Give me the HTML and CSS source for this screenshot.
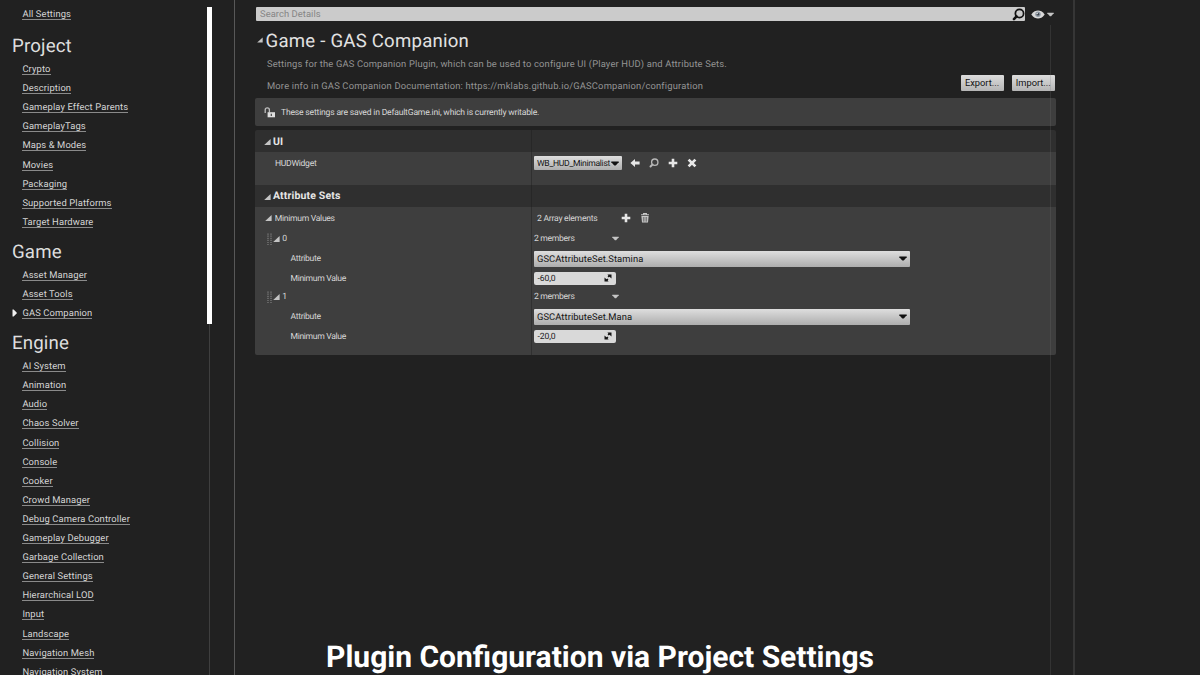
FILE: index.html
```
<!DOCTYPE html>
<html lang="en">
<head>
<meta charset="utf-8">
<title>Project Settings</title>
<link rel="stylesheet" href="styles.css">
</head>
<body>
<svg width="0" height="0" class="defs">
  <symbol id="tri" viewBox="0 0 7 6"><path d="M6.6 0V6H0.2Z" fill="#c4c4c4"/></symbol>
  <symbol id="down" viewBox="0 0 8 5"><path d="M0.3 0.5H7.7V1.2L4.7 4.5H3.3L0.3 1.2Z" fill="currentColor"/></symbol>
  <symbol id="plus" viewBox="0 0 10 10"><path d="M3.7 0.7H6.3V3.7H9.3V6.3H6.3V9.3H3.7V6.3H0.7V3.7H3.7Z" fill="#e6e6e6"/></symbol>
  <symbol id="mag" viewBox="0 0 12 12"><circle cx="6.9" cy="5" r="3.8" fill="none" stroke="currentColor" stroke-width="1.6"/><path d="M4.2 7.8L1.8 10.2" stroke="currentColor" stroke-width="2.4" stroke-linecap="round"/></symbol>
  <symbol id="grip" viewBox="0 0 5 12"><path d="M1 0.5V12M4 0.5V12" stroke="#858585" stroke-width="1.1" stroke-dasharray="1.2 0.9"/></symbol>
  <symbol id="spin" viewBox="0 0 8 8"><path d="M3.4 0.5H7.5V4.6L6.1 3.3L4.7 1.9ZM0.5 3.4L1.9 4.7L3.3 6.1L4.6 7.5H0.5Z" fill="#161616"/><path d="M4.1 2.9L5.9 1.3M2.1 6.7L3.9 5.1" stroke="#161616" stroke-width="1.6"/></symbol>
</svg>
<div class="app">
  <nav class="sidebar">
    <div class="links">
      <div class="item all"><a>All Settings</a></div>
      <h2>Project</h2>
      <div class="item"><a>Crypto</a></div>
      <div class="item"><a>Description</a></div>
      <div class="item"><a>Gameplay Effect Parents</a></div>
      <div class="item"><a>GameplayTags</a></div>
      <div class="item"><a>Maps &amp; Modes</a></div>
      <div class="item"><a>Movies</a></div>
      <div class="item"><a>Packaging</a></div>
      <div class="item"><a>Supported Platforms</a></div>
      <div class="item"><a>Target Hardware</a></div>
      <h2>Game</h2>
      <div class="item"><a>Asset Manager</a></div>
      <div class="item"><a>Asset Tools</a></div>
      <div class="item current"><svg class="pointer" viewBox="0 0 5 8"><path d="M0.5 0.6H1.6L4.6 3.4V4.6L1.6 7.4H0.5Z" fill="#f0f0f0"/></svg><a>GAS Companion</a></div>
      <h2>Engine</h2>
      <div class="item"><a>AI System</a></div>
      <div class="item"><a>Animation</a></div>
      <div class="item"><a>Audio</a></div>
      <div class="item"><a>Chaos Solver</a></div>
      <div class="item"><a>Collision</a></div>
      <div class="item"><a>Console</a></div>
      <div class="item"><a>Cooker</a></div>
      <div class="item"><a>Crowd Manager</a></div>
      <div class="item"><a>Debug Camera Controller</a></div>
      <div class="item"><a>Gameplay Debugger</a></div>
      <div class="item"><a>Garbage Collection</a></div>
      <div class="item"><a>General Settings</a></div>
      <div class="item"><a>Hierarchical LOD</a></div>
      <div class="item"><a>Input</a></div>
      <div class="item"><a>Landscape</a></div>
      <div class="item"><a>Navigation Mesh</a></div>
      <div class="item"><a>Navigation System</a></div>
    </div>
    <div class="scroll"><div class="thumb"></div><div class="track"></div></div>
  </nav>
  <main class="details">
    <div class="search-row">
      <div class="search"><span>Search Details</span><svg class="search-icon"><use href="#mag"/></svg></div>
      <svg class="eye" viewBox="0 0 14 9"><path d="M0.3 4.5C2.5 1.4 4.8 0.5 7 0.5S11.5 1.4 13.7 4.5C11.5 7.6 9.2 8.5 7 8.5S2.5 7.6 0.3 4.5Z" fill="#d9d9d9"/><circle cx="7" cy="4.3" r="2.7" fill="#8d97a2"/><circle cx="7" cy="4.3" r="1.2" fill="#3a4149"/><circle cx="6.2" cy="3.5" r=".7" fill="#eee"/></svg>
      <svg class="caret light"><use href="#down"/></svg>
    </div>
    <div class="title"><svg class="tri"><use href="#tri"/></svg><h1>Game - GAS Companion</h1></div>
    <p class="desc">Settings for the GAS Companion Plugin, which can be used to configure UI (Player HUD) and Attribute Sets.</p>
    <div class="desc-row">
      <p class="desc">More info in GAS Companion Documentation: https://mklabs.github.io/GASCompanion/configuration</p>
      <div class="buttons"><button class="export">Export...</button><button class="import">Import...</button></div>
    </div>
    <div class="notice">
      <svg class="lock" viewBox="0 0 12 11"><path d="M1.2 6V3A2.1 2.1 0 0 1 5.4 3V5.6" fill="none" stroke="#bdbdbd" stroke-width="1.3"/><path d="M3.6 5.2H11V10.3H3.6Z" fill="#dedede"/><path d="M6.7 6.7H8V9H6.7Z" fill="#555"/></svg>
      <span>These settings are saved in DefaultGame.ini, which is currently writable.</span>
    </div>
    <section class="grid">
      <div class="row head ui"><div class="name"><svg class="tri"><use href="#tri"/></svg>UI</div><div class="value"></div></div>
      <div class="row hud"><div class="name">HUDWidget</div><div class="value">
        <div class="combo small"><span>WB_HUD_Minimalist</span><svg class="caret"><use href="#down"/></svg></div>
        <svg class="ico" viewBox="0 0 10 10"><path d="M0.4 5L5 0.9V3.4H9.6V6.6H5V9.1Z" fill="#e6e6e6"/></svg>
        <svg class="ico find"><use href="#mag"/></svg>
        <svg class="ico"><use href="#plus"/></svg>
        <svg class="ico" viewBox="0 0 10 10"><path d="M1.6 1.6L8.4 8.4M8.4 1.6L1.6 8.4" stroke="#e6e6e6" stroke-width="2.7"/></svg>
      </div></div>
      <div class="row head sets"><div class="name"><svg class="tri"><use href="#tri"/></svg>Attribute Sets</div><div class="value"></div></div>
      <div class="row array"><div class="name"><svg class="tri"><use href="#tri"/></svg><span>Minimum Values</span></div><div class="value"><span class="count">2 Array elements</span>
        <svg class="ico"><use href="#plus"/></svg>
        <svg class="ico bin" viewBox="0 0 10 10"><path d="M3.6 1.2V0.5H6.4V1.2M1 1.8H9" fill="none" stroke="#c9c9c9" stroke-width="1.1"/><path d="M1.4 3H8.6L8 9.6H2Z" fill="#c9c9c9"/><path d="M3.4 4V8.7M5 4V8.7M6.6 4V8.7" stroke="#555" stroke-width=".7"/></svg>
      </div></div>
      <div class="row element"><div class="name"><svg class="grip"><use href="#grip"/></svg><svg class="tri"><use href="#tri"/></svg>0</div><div class="value"><span class="members">2 members</span><svg class="caret light"><use href="#down"/></svg></div></div>
      <div class="row leaf attr"><div class="name">Attribute</div><div class="value"><div class="combo wide"><span>GSCAttributeSet.Stamina</span><svg class="caret"><use href="#down"/></svg></div></div></div>
      <div class="row leaf"><div class="name">Minimum Value</div><div class="value"><div class="number"><span>-60,0</span><svg class="spin"><use href="#spin"/></svg></div></div></div>
      <div class="row element second"><div class="name"><svg class="grip"><use href="#grip"/></svg><svg class="tri"><use href="#tri"/></svg>1</div><div class="value"><span class="members">2 members</span><svg class="caret light"><use href="#down"/></svg></div></div>
      <div class="row leaf attr"><div class="name">Attribute</div><div class="value"><div class="combo wide"><span>GSCAttributeSet.Mana</span><svg class="caret"><use href="#down"/></svg></div></div></div>
      <div class="row leaf"><div class="name">Minimum Value</div><div class="value"><div class="number"><span>-20,0</span><svg class="spin"><use href="#spin"/></svg></div></div></div>
      <div class="row end"><div class="name"></div><div class="value"></div></div>
    </section>
    <div class="details-track"></div>
  </main>
</div>
<div class="caption">Plugin Configuration via Project Settings</div>
</body>
</html>
```
FILE: styles.css
```
* { box-sizing: border-box; }
body {
  margin: 0;
  width: 1200px;
  height: 675px;
  overflow: hidden;
  position: relative;
  background: #212121;
  color: #d6d6d6;
  font-family: Roboto, "Liberation Sans", sans-serif;
  text-rendering: geometricPrecision;
}
h1, h2, p { margin: 0; font-weight: 400; }
svg { display: block; flex: none; }
.defs { position: absolute; }
.app { display: flex; height: 675px; }

.sidebar {
  width: 235px;
  flex: none;
  display: flex;
  justify-content: space-between;
  border-right: 1px solid #585858;
  overflow: hidden;
}
.links { padding-top: 5.4px; }
.sidebar h2 {
  height: 34px;
  padding-left: 12px;
  font-size: 18.7px;
  line-height: 40px;
  letter-spacing: .14px;
  color: #dedede;
}
.item {
  height: 19.1px;
  padding-left: 22.4px;
  display: flex;
  align-items: flex-start;
  font-size: 9.4px;
  line-height: 11px;
  letter-spacing: .12px;
}
.item a { margin-top: 4px; height: 11px; border-bottom: 1px solid #8a8a8a; white-space: nowrap; }
.item.all { margin-bottom: 1.6px; }
.item.all a { margin-top: 3.6px; }
.item.current { padding-left: 12.4px; }
.pointer { width: 5px; height: 8px; margin: 5px 5px 0 0; }
.scroll { width: 5px; margin-right: 22px; padding-top: 7px; display: flex; flex-direction: column; align-items: center; }
.thumb { width: 5px; height: 317px; background: #fff; }
.track { width: 1px; flex: 1; background: #3f3f3f; }

.details {
  width: 840px;
  flex: none;
  position: relative;
  padding: 7px 18px 0 20px;
  border-right: 2px solid #363636;
}
.search-row { display: flex; align-items: center; height: 14px; padding-left: 1px; }
.search {
  width: 769px;
  height: 14px;
  display: flex;
  align-items: center;
  justify-content: space-between;
  padding: 0 0 0 4px;
  background: #cbcbcb;
  color: #858585;
  border-radius: 1px;
  font-size: 9.4px;
  letter-spacing: .06px;
}
.search span { padding-top: 1px; }
.search-icon { width: 13px; height: 13px; color: #111; }
.eye { width: 14px; height: 9px; margin: 0 2px 0 6px; }
.caret { width: 8px; height: 5px; color: #111; }
.caret.light { width: 7px; color: #c4c4c4; }
.tri { width: 7px; height: 6px; }
.title { display: flex; align-items: center; height: 26px; margin-top: 7px; padding-left: 1.5px; }
.title .tri { width: 6px; margin: -2px 3px 0 0; }
h1 { font-size: 18.6px; line-height: 26px; letter-spacing: .23px; color: #e2e2e2; }
.desc { padding: 1px 0 0 12px; font-size: 9.4px; letter-spacing: .16px; line-height: 20px; color: #949494; white-space: nowrap; }
.desc-row { display: flex; justify-content: space-between; align-items: flex-start; height: 23px; }
.desc-row .desc { padding-top: 0; line-height: 24px; letter-spacing: .17px; }
.buttons { display: flex; gap: 8px; }
button {
  height: 16px;
  padding: 0;
  margin: 0;
  border: 0;
  border-radius: 1px;
  font: 9.3px/16px Roboto, sans-serif;
  letter-spacing: 0;
  color: #111;
  background: linear-gradient(#dcdcdc, #b4b4b4);
}
.export { width: 43px; }
.import { width: 43.5px; }
.notice {
  width: 801.5px;
  margin-left: -.5px;
  height: 28px;
  display: flex;
  align-items: center;
  padding-left: 9px;
  background: #3e3e3e;
  border-radius: 2px;
  font-size: 8.6px;
  letter-spacing: -.2px;
  color: #d8d8d8;
}
.notice span { padding-top: 1px; }
.lock { width: 12px; height: 11px; margin-right: 5.5px; }

.grid { width: 801.5px; margin: 4px 0 0 -.5px; border-radius: 2px; overflow: hidden; font-size: 8.6px; letter-spacing: -.3px; }
.row { display: flex; height: 19.5px; background: #3e3e3e; }
.name { width: 277px; flex: none; display: flex; align-items: center; border-right: 1px solid #303030; }
.value { display: flex; align-items: center; padding-left: 2.5px; }
.head { background: #2f2f2f; font-size: 10.5px; font-weight: 700; letter-spacing: .15px; color: #e6e6e6; }
.head .name { padding-left: 9.5px; border-right-color: #272727; padding-bottom: 0; }
.head .tri { margin: 2px 2px 0 0; }
.ui { height: 22px; }
.sets { height: 22px; }
.sets .name { padding-bottom: 1px; }
.hud { height: 33px; padding-bottom: 11px; }
.hud .name { padding-left: 20.5px; padding-top: 1px; margin-bottom: -11px; padding-bottom: 11px; }
.combo {
  display: flex;
  align-items: center;
  justify-content: space-between;
  color: #141414;
  border-radius: 1px;
  background: linear-gradient(#dedede, #adadad);
}
.combo.small { width: 88px; height: 14px; padding: 0 3px 0 3px; margin-right: 7.7px; }
.combo span, .number span { padding-top: 1px; }
.combo.wide { width: 375.5px; height: 16px; padding: 0 3px; font-size: 9.4px; letter-spacing: .07px; }
.ico { width: 10px; height: 10px; margin-right: 9px; }
.find { color: #b8b8b8; }
.array { height: 22px; }
.array .name { padding-left: 10px; }
.array .name span, .count { padding-top: 1px; }
.array .tri { margin: -1px 3.3px 0 0; }
.count { width: 87px; padding-left: 3px; letter-spacing: -.24px; }
.element { height: 19px; }
.element.second { height: 18px; }
.element .name { padding-left: 12px; }
.element .tri { margin: 0 2.8px 0 1px; }
.element.second .name, .element.second .value { padding-bottom: 1px; }
.grip { width: 5px; height: 12px; }
.members { width: 78px; }
.leaf .name { padding-left: 36px; padding-top: 1px; letter-spacing: -.33px; }
.leaf.attr { height: 20.5px; }
.leaf.attr .value { padding-top: 1px; }
.number {
  width: 82px;
  height: 13px;
  margin-left: -.1px;
  display: flex;
  align-items: center;
  justify-content: space-between;
  padding: 0 4px 0 3.5px;
  background: #d9d9d9;
  border-radius: 2px;
  color: #1c1c1c;
  letter-spacing: -.1px;
}
.spin { width: 8px; height: 8px; }
.end { height: 9px; }
.details-track { position: absolute; left: 815px; top: 25px; bottom: 0; width: 1px; background: rgba(120, 120, 120, .22); }

.caption {
  position: absolute;
  left: 0;
  right: 0;
  top: 639px;
  text-align: center;
  font-size: 30px;
  line-height: 38px;
  font-weight: 700;
  color: #fff;
  white-space: nowrap;
}
```
